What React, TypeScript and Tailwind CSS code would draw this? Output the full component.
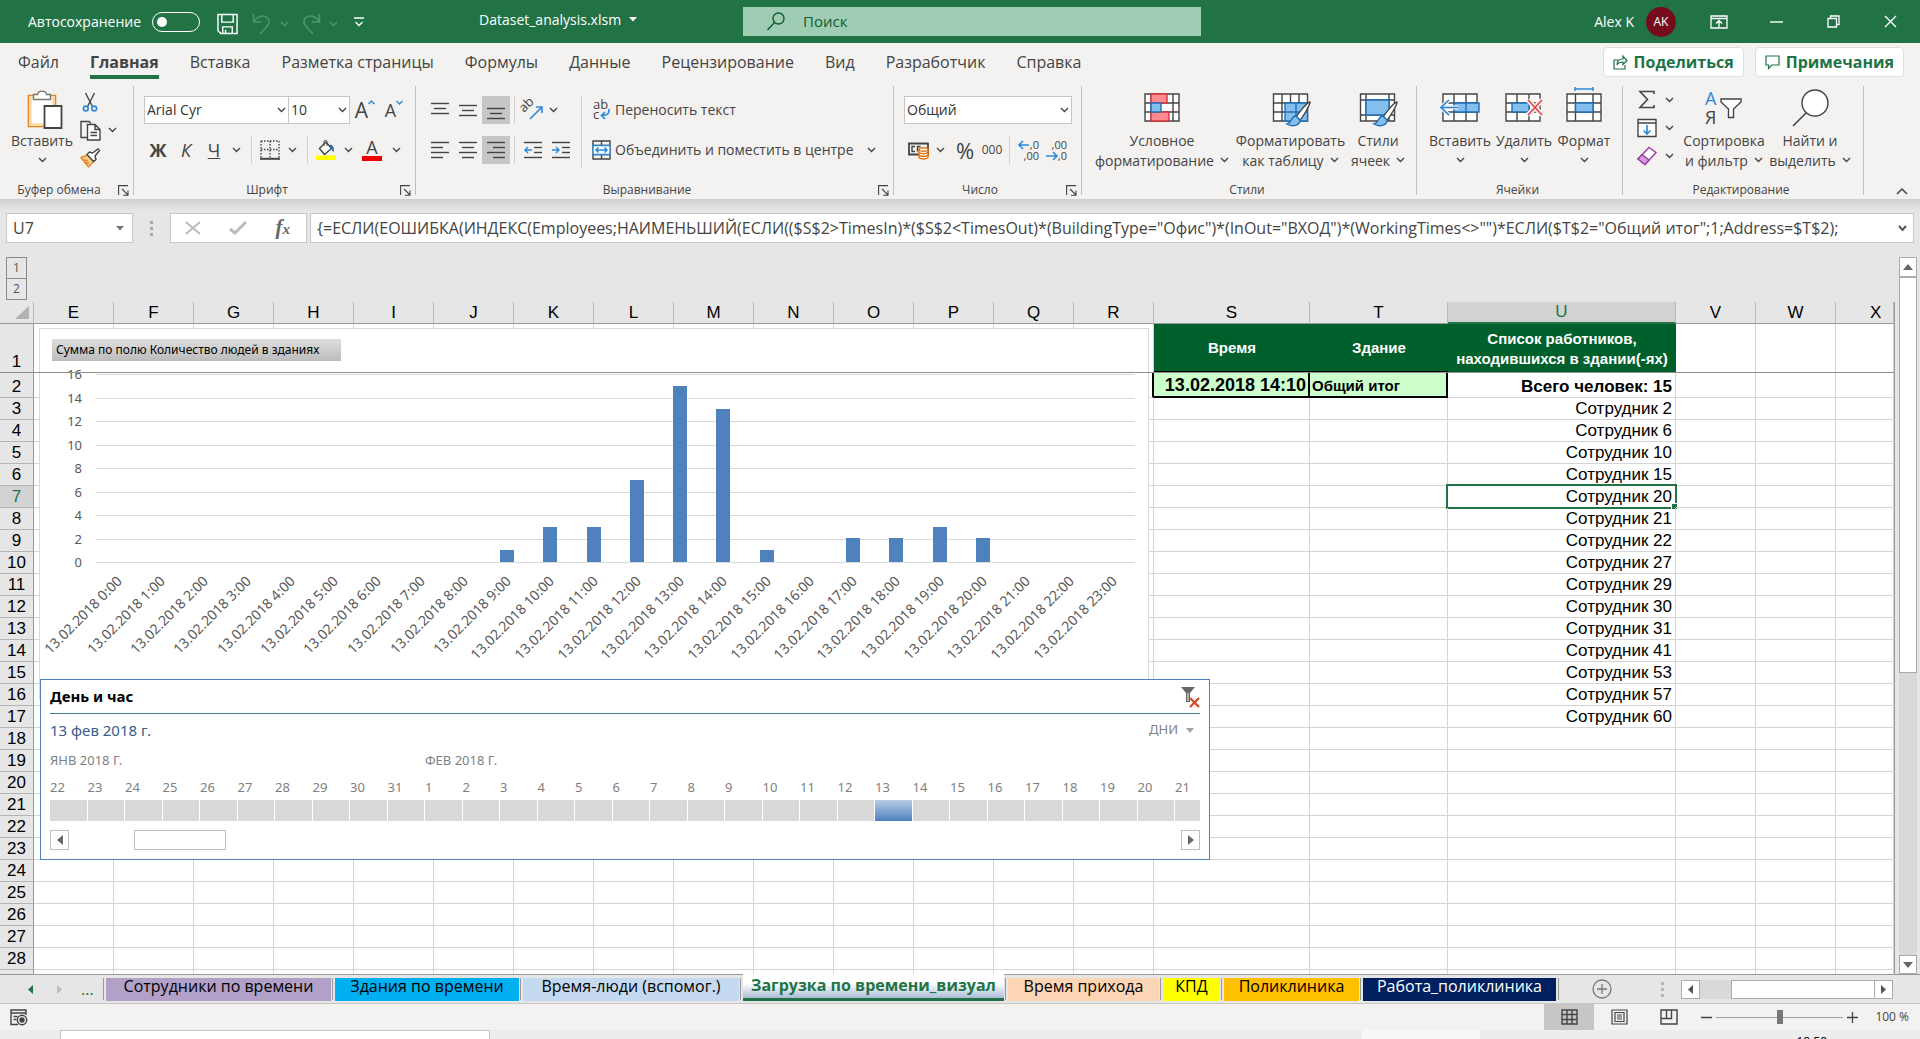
import type { ReactNode } from "react";

const BAR_COUNTS = [0, 0, 0, 0, 0, 0, 0, 0, 0, 1, 3, 3, 7, 15, 13, 1, 0, 2, 2, 3, 2, 0, 0, 0];

const COLUMNS = ["E", "F", "G", "H", "I", "J", "K", "L", "M", "N", "O", "P", "Q", "R", "S", "T", "U", "V", "W", "X"];

const EMPLOYEES = [2, 6, 10, 15, 20, 21, 22, 27, 29, 30, 31, 41, 53, 57, 60];

const ROWS = Array.from({ length: 28 }, (_, i) => i + 2);

const DAYS = [22, 23, 24, 25, 26, 27, 28, 29, 30, 31, ...Array.from({ length: 21 }, (_, i) => i + 1)];

const MENU = ["Файл", "Главная", "Вставка", "Разметка страницы", "Формулы", "Данные", "Рецензирование", "Вид", "Разработчик", "Справка"];

const SHEETS = [
    { name: "Сотрудники по времени", width: "w-[225px]", color: "bg-[#b1a0c7] text-black" },
    { name: "Здания по времени", width: "w-[184px]", color: "bg-[#00b0f0] text-black" },
    { name: "Время-люди (вспомог.)", width: "w-[216px]", color: "bg-[#c5d9f1] text-black" },
    { name: "Загрузка по времени_визуал", width: "w-[261px]", color: "" },
    { name: "Время прихода", width: "w-[151px]", color: "bg-[#fcd5b4] text-black" },
    { name: "КПД", width: "w-[57px]", color: "bg-[#ffff00] text-black" },
    { name: "Поликлиника", width: "w-[135px]", color: "bg-[#ffc000] text-black" },
    { name: "Работа_поликлиника", width: "w-[193px]", color: "bg-[#002060] text-white" },
];

/* ---------- small drawings ---------- */

const Chevron = ({ className = "" }: { className?: string }) => (
    <svg width="9" height="6" viewBox="0 0 9 6" className={`inline-block shrink-0 ${className}`}>
        <path d="M1 1l3.500 3.500L8 1" fill="none" stroke="currentColor" strokeWidth="1.400" />
    </svg>
);

const Launcher = () => (
    <svg width="11" height="11" viewBox="0 0 11 11" fill="none" stroke="#444" strokeWidth="1.100">
        <path d="M.6 10V.6H10M4 4l6 6M10 5.500V10.200H5" />
    </svg>
);

const Icon = ({ w = 20, h = 20, children }: { w?: number; h?: number; children: ReactNode }) => (
    <svg width={w} height={h} viewBox={`0 0 ${w} ${h}`} fill="none" stroke="#444" strokeWidth="1.400" className="shrink-0 overflow-visible">
        {children}
    </svg>
);

const PasteIcon = () => (
    <Icon w={42} h={39}>
        <path d="M7.500 6.500h27v31h-27z" fill="#fff" stroke="#e3862a" strokeWidth="1.600" />
        <path d="M9.500 8.500h23v27h-23z" stroke="#fbd9a0" strokeWidth="2.400" />
        <path d="M12.500 5.500h4c.5-4.500 8.500-4.500 9 0h4v5h-17z" fill="#fff" stroke="#777" />
        <path d="M23.500 17h17v22h-17z" fill="#fff" strokeWidth="1.800" />
    </Icon>
);

const CutIcon = () => (
    <Icon w={16}>
        <path d="M3.500 1l7 13.500M12.500 1l-7 13.500" />
        <circle cx="3.800" cy="16.500" r="2.400" stroke="#2b88d8" strokeWidth="1.600" />
        <circle cx="12.200" cy="16.500" r="2.400" stroke="#2b88d8" strokeWidth="1.600" />
    </Icon>
);

const CopyIcon = () => (
    <Icon w={21} h={21}>
        <path d="M7 17.500H1v-16h8l2 2" />
        <path d="M7.500 4.500h7.500l5 5v10.500H7.500zM15 4.500v5h5M10.500 12.500h6.500M10.500 15.500h6.500" fill="#fff" />
    </Icon>
);

const BrushIcon = () => (
    <Icon w={21}>
        <path d="M1 9.500l6.500-2.500 6 6.500-5 5.500z" fill="#fbd08a" stroke="#e3862a" />
        <path d="M3 12l5 .5M5 14.500l4 .5" stroke="#e3862a" />
        <path d="M7 6.500l2.500-2.500 3 1 5.500-4 1.500 1.500-4.500 5.500 1 3.500-2.500 2z" fill="#fff" />
    </Icon>
);

const BordersIcon = () => (
    <Icon>
        <path d="M1 1h18M1 1v17M19 1v17M10 1v17M1 9.500h18" strokeDasharray="1.500 1.500" />
        <path d="M0 18.800h20" strokeWidth="2" />
    </Icon>
);

const FillIcon = () => (
    <Icon>
        <path d="M3.500 8.500L10 2l5.500 6.500-7 6z" fill="#fff" />
        <path d="M8 6V1.500c0-1.500 3-1.500 3 0V6" strokeWidth="1" />
        <path d="M13.500 5c3-1 4.500 2 4.500 6.500-2 .5-2.500-3-4.500-6.500z" fill="#1e6fb8" stroke="none" />
        <path d="M0 15.500h20v4.500H0z" fill="#ffff00" stroke="none" />
    </Icon>
);

const Lines = ({ rows, accent }: { rows: [number, number, number][]; accent?: ReactNode }) => (
    <Icon w={18} h={20}>
        {rows.map(([y, x1, x2]) => (
            <path key={y} d={`M${x1} ${y}.500H${x2}`} />
        ))}
        {accent}
    </Icon>
);

const OrientIcon = () => (
    <Icon w={22}>
        <text x="2" y="13" fontSize="13" fill="#444" stroke="none" transform="rotate(-45 2 13)">ab</text>
        <path d="M8 19L20 7M14 7h6v6" stroke="#2b88d8" strokeWidth="1.600" />
    </Icon>
);

const WrapIcon = () => (
    <Icon w={18} h={22}>
        <text x="1" y="10" fontSize="13" fill="#444" stroke="none">ab</text>
        <text x="1" y="20" fontSize="13" fill="#444" stroke="none">c</text>
        <path d="M17 10c.5 4-1 6.500-7 6.500M13 13l-3.500 3.500L13 20" stroke="#2b88d8" strokeWidth="1.700" />
    </Icon>
);

const MergeIcon = () => (
    <Icon w={19}>
        <path d="M1 1h17v18H1zM1 5.500h17M1 14.500h17M9.500 1v4.500M9.500 14.500V19" />
        <path d="M1 5.500h17v9H1z" fill="#fff" stroke="#2b88d8" />
        <path d="M4 10h11M6.500 7.500L4 10l2.500 2.500M12.500 7.500L15 10l-2.500 2.500" stroke="#2b88d8" strokeWidth="1.500" />
    </Icon>
);

const MoneyIcon = () => (
    <Icon w={21}>
        <path d="M1 3.500h19v11H1z" strokeWidth="1.800" />
        <path d="M7 6.500H4v5h3M12.500 6.500H9.500v5" />
        <path d="M11 9.500v8c1.500 2 7 2 9 0v-8z" fill="#fff" stroke="#e3720d" />
        <ellipse cx="15.500" cy="9.500" rx="4.500" ry="1.700" fill="#fff" stroke="#e3720d" />
        <path d="M11 12.200c1.500 2 7 2 9 0M11 15c1.500 2 7 2 9 0" stroke="#e3720d" />
    </Icon>
);

const DecimalIcon = ({ more }: { more?: boolean }) => (
    <Icon w={21} h={22}>
        <g fill="#444" stroke="none" fontSize="11" textAnchor="end">
            <text x="21" y="10">{more ? ",0" : ",00"}</text>
            <text x="21" y="21">{more ? ",00" : ",0"}</text>
        </g>
        {more ? (
            <path d="M11 6H1M5 2L1 6l4 4" stroke="#2b88d8" strokeWidth="1.600" />
        ) : (
            <path d="M0 17h11M7 13l4 4-4 4" stroke="#2b88d8" strokeWidth="1.600" />
        )}
    </Icon>
);

const CondIcon = () => (
    <Icon w={36} h={40}>
        <path d="M1 6h34v27H1zM29 6v27M1 15h34M1 24h34M7 6v27" fill="#fff" />
        <path d="M7 6h16v9H7zM7 24h18v9H7z" fill="#ff8a8f" stroke="#d8343a" />
        <path d="M7 15h10v9H7z" fill="#83beec" stroke="#1e6fb8" />
    </Icon>
);

const Brush = () => (
    <>
        <path d="M38 14c-3 0-12 12-14 15l4 3c3-3 10-15 10-18z" fill="#fff" />
        <path d="M24 28c-5 0-4 7-9 8 5 3 13 2 13-4z" fill="#83beec" stroke="#1e6fb8" />
    </>
);

const TableStyleIcon = () => (
    <Icon w={38} h={40}>
        <path d="M1.500 6h34v27h-34zM10 6v27M18.500 6v27M27 6v27M1.500 15h34M1.500 24h34" fill="#fff" />
        <path d="M13 15h22.500v18H13z" fill="#83beec" stroke="#1e6fb8" />
        <path d="M13 24h22.500M24 15v18" stroke="#1e6fb8" />
        <Brush />
    </Icon>
);

const CellStyleIcon = () => (
    <Icon w={38} h={40}>
        <path d="M1.500 6h34v27h-34zM1.500 12h34M1.500 27h34M7 6v27M30 6v27" fill="#fff" />
        <path d="M7 12h23v15H7z" fill="#83beec" stroke="#1e6fb8" />
        <Brush />
    </Icon>
);

const InsertIcon = () => (
    <Icon w={40} h={40}>
        <path d="M3 6h34v27H3zM14 6v27M26 6v27M3 15h34M3 24h34" fill="#fff" />
        <path d="M14 15h25v9H14z" fill="#83beec" stroke="#1e6fb8" />
        <path d="M26 15v9" stroke="#1e6fb8" />
        <path d="M18 19.500H2M9 12l-8 7.500L9 27" stroke="#f3f2f1" strokeWidth="4" />
        <path d="M18 19.500H2M9 12l-8 7.500L9 27" stroke="#2b88d8" strokeWidth="1.700" />
    </Icon>
);

const DeleteIcon = () => (
    <Icon w={40} h={40}>
        <path d="M2 6h34v27H2zM13 6v27M25 6v27M2 15h34M2 24h34" fill="#fff" />
        <path d="M8 15h17v9H8z" fill="#83beec" stroke="#1e6fb8" />
        <path d="M24 12l14 15M38 12L24 27" stroke="#f3f2f1" strokeWidth="5" />
        <path d="M24 12l14 15M38 12L24 27" stroke="#e8474c" strokeWidth="1.700" />
    </Icon>
);

const FormatIcon = () => (
    <Icon w={36} h={40}>
        <path d="M1 6h34v27H1zM9.500 6v27M27 6v27M1 15h34M1 24h34" fill="#fff" />
        <path d="M9.500 15H27v9H9.500z" fill="#83beec" stroke="#1e6fb8" />
        <path d="M9 1h18M9-1v4M27-1v4" stroke="#2b88d8" />
    </Icon>
);

const SortIcon = () => (
    <Icon w={38} h={40}>
        <text x="0" y="17" fontSize="18" fill="#2b88d8" stroke="none">А</text>
        <text x="0" y="36" fontSize="18" fill="#444" stroke="none">Я</text>
        <path d="M16 11h20v3l-7.500 7v8.500h-5V21L16 14z" fill="#fff" />
    </Icon>
);

const FindIcon = () => (
    <Icon w={38} h={40}>
        <circle cx="24" cy="15" r="13" fill="#fff" />
        <path d="M15 25L2 38" strokeWidth="1.600" />
    </Icon>
);

/* ---------- ribbon ---------- */

const ToolButton = ({ label, className = "w-7", children }: { label: string; className?: string; children: ReactNode }) => (
    <button type="button" aria-label={label} className={`flex h-7 shrink-0 items-center justify-center ${className}`}>
        {children}
    </button>
);

const Sep = () => <div className="mr-1 ml-[7px] h-7 w-px shrink-0 bg-[#d2d0ce]" />;

const BigButton = ({ icon, lines, className, chevronBelow }: { icon: ReactNode; lines: string[]; className: string; chevronBelow?: boolean }) => (
    <button type="button" className={`flex shrink-0 flex-col items-center whitespace-nowrap pt-0.5 text-sm leading-5 ${className}`}>
        <span className="mb-[3px] flex h-10 items-center">{icon}</span>
        {lines.map((line, i) => (
            <span key={line}>
                {line}
                {!chevronBelow && i === lines.length - 1 && <Chevron className="mb-1 ml-1.5" />}
            </span>
        ))}
        {chevronBelow && <Chevron className="mt-1.5" />}
    </button>
);

const Group = ({ title, launcher, className, children }: { title: string; launcher?: boolean; className: string; children: ReactNode }) => (
    <section className={`flex shrink-0 ${className}`}>
        <div className="flex min-w-0 flex-1 flex-col">
            <div className="h-24">{children}</div>
            <div className="flex h-[18px] items-center pr-1">
                <h3 className="flex-1 text-center text-xs">{title}</h3>
                {launcher && (
                    <button type="button" aria-label={`${title}: параметры`}>
                        <Launcher />
                    </button>
                )}
            </div>
        </div>
        <div className="h-[109px] w-px bg-[#c2c0be]" />
    </section>
);

const Picker = ({ label, value, className }: { label: string; value: string; className: string }) => (
    <label className={`relative flex h-7 shrink-0 items-center border border-[#c8c6c4] bg-white ${className}`}>
        <select aria-label={label} className="h-full w-full appearance-none bg-transparent pl-0.5 text-sm text-[#333] outline-none">
            <option>{value}</option>
        </select>
        <Chevron className="pointer-events-none absolute right-0.5" />
    </label>
);

const Ribbon = () => (
    <div className="flex h-[120px] border-b border-[#d0d0d0] bg-[#f3f2f1] pt-1.5 text-[#444]">
        <Group title="Буфер обмена" launcher className="w-[134px]">
            <div className="flex">
                <BigButton icon={<PasteIcon />} lines={["Вставить"]} chevronBelow className="ml-1.5 w-[72px]" />
                <div className="flex flex-col pt-0.5">
                    <ToolButton label="Вырезать" className="w-6"><CutIcon /></ToolButton>
                    <div className="flex">
                        <ToolButton label="Копировать" className="w-6"><CopyIcon /></ToolButton>
                        <ToolButton label="Параметры копирования" className="w-5"><Chevron /></ToolButton>
                    </div>
                    <ToolButton label="Формат по образцу" className="w-6"><BrushIcon /></ToolButton>
                </div>
            </div>
        </Group>

        <Group title="Шрифт" launcher className="w-[282px]">
            <div className="flex flex-col gap-3 pt-2.5 pl-[10px]">
                <div className="flex">
                    <Picker label="Шрифт" value="Arial Cyr" className="w-[145px]" />
                    <Picker label="Размер шрифта" value="10" className="-ml-px w-[62px]" />
                    <ToolButton label="Увеличить размер шрифта" className="w-[30px]">
                        <span className="text-[21px] leading-7">A</span>
                        <svg width="7" height="5" viewBox="0 0 7 5" className="mb-4"><path d="M.5 4l3-3 3 3" fill="none" stroke="#2b88d8" strokeWidth="1.300" /></svg>
                    </ToolButton>
                    <ToolButton label="Уменьшить размер шрифта">
                        <span className="text-[18px] leading-7">A</span>
                        <svg width="7" height="5" viewBox="0 0 7 5" className="mb-4"><path d="M.5 1l3 3 3-3" fill="none" stroke="#2b88d8" strokeWidth="1.300" /></svg>
                    </ToolButton>
                </div>
                <div className="flex">
                    <ToolButton label="Полужирный"><b className="text-[18px] leading-7">Ж</b></ToolButton>
                    <ToolButton label="Курсив"><i className="text-[18px] leading-7">К</i></ToolButton>
                    <ToolButton label="Подчеркнутый"><u className="text-[18px] leading-7">Ч</u></ToolButton>
                    <ToolButton label="Вид подчеркивания" className="w-4"><Chevron /></ToolButton>
                    <Sep />
                    <ToolButton label="Границы"><BordersIcon /></ToolButton>
                    <ToolButton label="Виды границ" className="w-4"><Chevron /></ToolButton>
                    <Sep />
                    <ToolButton label="Цвет заливки"><FillIcon /></ToolButton>
                    <ToolButton label="Цвета заливки" className="w-4"><Chevron /></ToolButton>
                    <ToolButton label="Цвет текста" className="w-8">
                        <span className="flex w-5 flex-col items-center border-b-[5px] border-[#f00000] text-[18px] leading-[17px]">A</span>
                    </ToolButton>
                    <ToolButton label="Цвета текста" className="w-4"><Chevron /></ToolButton>
                </div>
            </div>
        </Group>

        <Group title="Выравнивание" launcher className="w-[478px]">
            <div className="flex pt-2.5 pl-[10px]">
                <div className="flex flex-col gap-3">
                    <div className="flex">
                        <ToolButton label="По верхнему краю"><Lines rows={[[3, 0, 18], [8, 3, 15], [13, 0, 18]]} /></ToolButton>
                        <ToolButton label="По середине"><Lines rows={[[5, 0, 18], [10, 3, 15], [15, 0, 18]]} /></ToolButton>
                        <ToolButton label="По нижнему краю" className="w-7 bg-[#c8c6c4]"><Lines rows={[[8, 0, 18], [13, 3, 15], [18, 0, 18]]} /></ToolButton>
                        <div className="mr-1 ml-1 h-7 w-px bg-[#d2d0ce]" />
                        <ToolButton label="Ориентация"><OrientIcon /></ToolButton>
                        <ToolButton label="Виды ориентации" className="w-3"><Chevron /></ToolButton>
                    </div>
                    <div className="flex">
                        <ToolButton label="По левому краю"><Lines rows={[[2, 0, 18], [7, 0, 12], [12, 0, 18], [17, 0, 12]]} /></ToolButton>
                        <ToolButton label="По центру"><Lines rows={[[2, 0, 18], [7, 3, 15], [12, 0, 18], [17, 3, 15]]} /></ToolButton>
                        <ToolButton label="По правому краю" className="w-7 bg-[#c8c6c4]"><Lines rows={[[2, 0, 18], [7, 6, 18], [12, 0, 18], [17, 6, 18]]} /></ToolButton>
                        <div className="mr-1 ml-1 h-7 w-px bg-[#d2d0ce]" />
                        <ToolButton label="Уменьшить отступ">
                            <Lines rows={[[2, 0, 18], [7, 10, 18], [12, 10, 18], [17, 0, 18]]} accent={<path d="M8 10H1M4 7l-3 3 3 3" stroke="#2b88d8" />} />
                        </ToolButton>
                        <ToolButton label="Увеличить отступ">
                            <Lines rows={[[2, 0, 18], [7, 10, 18], [12, 10, 18], [17, 0, 18]]} accent={<path d="M0 10h7M4 7l3 3-3 3" stroke="#2b88d8" />} />
                        </ToolButton>
                    </div>
                </div>
                <div className="ml-1.5 h-[72px] w-px bg-[#d2d0ce]" />
                <div className="ml-2.5 flex flex-col gap-3 text-sm">
                    <button type="button" className="flex h-7 items-center gap-[5px] whitespace-nowrap">
                        <WrapIcon />
                        Переносить текст
                    </button>
                    <div className="flex">
                        <button type="button" className="flex h-7 items-center gap-1 whitespace-nowrap">
                            <MergeIcon />
                            Объединить и поместить в центре
                        </button>
                        <ToolButton label="Виды объединения" className="w-9"><Chevron /></ToolButton>
                    </div>
                </div>
            </div>
        </Group>

        <Group title="Число" launcher className="w-[188px]">
            <div className="flex flex-col gap-3 pt-2.5 pl-[10px]">
                <Picker label="Числовой формат" value="Общий" className="w-[168px]" />
                <div className="flex">
                    <ToolButton label="Финансовый формат"><MoneyIcon /></ToolButton>
                    <ToolButton label="Виды финансового формата" className="w-4"><Chevron /></ToolButton>
                    <ToolButton label="Процентный формат" className="w-[34px]"><span className="text-[22px] leading-7">%</span></ToolButton>
                    <ToolButton label="Формат с разделителями" className="w-5"><span className="text-xs">000</span></ToolButton>
                    <Sep />
                    <ToolButton label="Увеличить разрядность"><DecimalIcon more /></ToolButton>
                    <ToolButton label="Уменьшить разрядность"><DecimalIcon /></ToolButton>
                </div>
            </div>
        </Group>

        <Group title="Стили" className="w-[335px]">
            <div className="flex pl-2.5">
                <BigButton icon={<CondIcon />} lines={["Условное", "форматирование"]} className="w-[140px]" />
                <BigButton icon={<TableStyleIcon />} lines={["Форматировать", "как таблицу"]} className="w-[117px]" />
                <BigButton icon={<CellStyleIcon />} lines={["Стили", "ячеек"]} className="w-[58px]" />
            </div>
        </Group>

        <Group title="Ячейки" className="w-[206px]">
            <div className="flex pl-[10px]">
                <BigButton icon={<InsertIcon />} lines={["Вставить"]} chevronBelow className="w-[66px]" />
                <BigButton icon={<DeleteIcon />} lines={["Удалить"]} chevronBelow className="w-[62px]" />
                <BigButton icon={<FormatIcon />} lines={["Формат"]} chevronBelow className="w-[58px]" />
            </div>
        </Group>

        <Group title="Редактирование" className="w-[241px]">
            <div className="flex pl-[10px]">
                <div className="flex flex-col">
                    <div className="flex">
                        <ToolButton label="Сумма" className="w-7">
                            <Icon w={18}><path d="M16 4V1.500H2L9.500 9.500 2 17.500h14V15" strokeWidth="1.600" /></Icon>
                        </ToolButton>
                        <ToolButton label="Виды сумм" className="w-4"><Chevron /></ToolButton>
                    </div>
                    <div className="flex">
                        <ToolButton label="Заполнить" className="w-7">
                            <Icon><path d="M1 1.500h18v17H1zM1 5h18" fill="#fff" /><path d="M10 7v9M6.500 12.500L10 16l3.500-3.500" stroke="#2b88d8" strokeWidth="1.600" /></Icon>
                        </ToolButton>
                        <ToolButton label="Виды заполнения" className="w-4"><Chevron /></ToolButton>
                    </div>
                    <div className="flex">
                        <ToolButton label="Очистить" className="w-7">
                            <Icon><path d="M1 13L12 1.500l7 5L8 18.500z" fill="#fff" stroke="#9a3fa5" /><path d="M1 13l4-4.500 7 5.500-4 4.500z" fill="#d59ddb" stroke="#9a3fa5" /></Icon>
                        </ToolButton>
                        <ToolButton label="Виды очистки" className="w-4"><Chevron /></ToolButton>
                    </div>
                </div>
                <BigButton icon={<SortIcon />} lines={["Сортировка", "и фильтр"]} className="ml-1 w-[86px]" />
                <BigButton icon={<FindIcon />} lines={["Найти и", "выделить"]} className="w-[86px]" />
            </div>
        </Group>

        <button type="button" aria-label="Свернуть ленту" className="mb-1 ml-auto flex items-end pr-3">
            <svg width="12" height="8" viewBox="0 0 12 8"><path d="M1 7l5-5 5 5" fill="none" stroke="#444" strokeWidth="1.500" /></svg>
        </button>
    </div>
);

const TitleBar = () => (
    <header className="flex h-[43px] items-center bg-[#217346] text-sm text-white">
        <div className="flex w-[479px] shrink-0 items-center pl-7">
            <label className="flex items-center gap-[11px]">
                Автосохранение
                <input type="checkbox" role="switch" className="peer sr-only" />
                <span className="flex h-5 w-12 items-center rounded-full border border-white px-1">
                    <span className="h-2.5 w-2.5 rounded-full bg-white" />
                </span>
            </label>
            <button type="button" aria-label="Сохранить" className="ml-[17px] pt-1">
                <svg width="21" height="22" viewBox="0 0 22 22" fill="none" stroke="#fff" strokeWidth="1.500"><path d="M1 1h20v20H4l-3-3zM5 1v8h12V1M6 21v-7h10v7M9 17v4" /></svg>
            </button>
            <button type="button" aria-label="Отменить" className="ml-3.5 flex items-center gap-2 pt-1 text-[#4f9570]">
                <svg width="20" height="22" viewBox="0 0 20 22" fill="none" stroke="currentColor" strokeWidth="1.500"><path d="M1.500 1v8h8M1.500 9C5 3 12 1 16 5.500c3 4 0 7-8 15.500" /></svg>
                <Chevron />
            </button>
            <button type="button" aria-label="Вернуть" className="ml-3 flex items-center gap-2 pt-1 text-[#4f9570]">
                <svg width="20" height="22" viewBox="0 0 20 22" fill="none" stroke="currentColor" strokeWidth="1.500"><path d="M18.500 1v8h-8M18.500 9C15 3 8 1 4 5.500c-3 4 0 7 8 15.500" /></svg>
                <Chevron />
            </button>
            <button type="button" aria-label="Настройка панели" className="ml-4">
                <svg width="10" height="10" viewBox="0 0 10 10" fill="none" stroke="#fff" strokeWidth="1.300"><path d="M0 1h10M1.500 5L5 8.500 8.500 5" /></svg>
            </button>
        </div>
        <button type="button" className="flex w-[264px] shrink-0 items-center gap-2 pb-1">
            Dataset_analysis.xlsm
            <svg width="8" height="5" viewBox="0 0 8 5"><path d="M0 0h8L4 4.500z" fill="#fff" /></svg>
        </button>
        <label className="flex h-[29px] w-[458px] shrink-0 items-center bg-[#9fcdb3] pl-6 text-[15px] text-[#0e5c2f]">
            <svg width="18" height="19" viewBox="0 0 18 19" fill="none" stroke="currentColor" strokeWidth="1.400"><circle cx="11.500" cy="6.500" r="5.500" /><path d="M7.500 10.500L.5 18" /></svg>
            <input type="text" aria-label="Поиск" placeholder="Поиск" className="ml-[18px] flex-1 bg-transparent outline-none placeholder:text-[#0e5c2f]" />
        </label>
        <div className="ml-auto flex items-center">
            <span>Alex K</span>
            <span className="ml-3 flex h-[30px] w-[30px] items-center justify-center rounded-full bg-[#750b1c] text-xs">AK</span>
            <button type="button" aria-label="Параметры ленты" className="ml-[34px]">
                <svg width="18" height="14" viewBox="0 0 18 14" fill="none" stroke="#fff" strokeWidth="1.300"><path d="M1 1h16v12H1zM1 3.500h16M9 12V6M6 8.500L9 5.500l3 3" /></svg>
            </button>
            <button type="button" aria-label="Свернуть" className="ml-[42px]">
                <svg width="13" height="12" viewBox="0 0 13 12"><path d="M0 6h13" stroke="#fff" strokeWidth="1.400" /></svg>
            </button>
            <button type="button" aria-label="Восстановить" className="ml-11">
                <svg width="13" height="13" viewBox="0 0 13 13" fill="none" stroke="#fff" strokeWidth="1.300"><path d="M1 3.500h8.500V12H1zM3.500 3.500V1H12v8.500H9.500" /></svg>
            </button>
            <button type="button" aria-label="Закрыть" className="mr-[23px] ml-11">
                <svg width="13" height="13" viewBox="0 0 13 13" fill="none" stroke="#fff" strokeWidth="1.400"><path d="M1 1l11 11M12 1L1 12" /></svg>
            </button>
        </div>
    </header>
);

const MenuBar = () => (
    <nav className="flex h-[37px] items-start bg-[#f3f2f1] pl-[18px] text-[16px] text-[#444]">
        <div className="flex gap-[31px] pt-[7px]">
            {MENU.map((item) => (
                <button
                    key={item}
                    type="button"
                    className={item === "Главная" ? "border-b-4 border-[#217346] font-bold leading-[25px]" : "border-b-4 border-transparent leading-[25px]"}>
                    {item}
                </button>
            ))}
        </div>
        <div className="ml-auto flex gap-[11px] pt-1 pr-4 font-bold text-[#217346]">
            <button type="button" className="flex h-[30px] items-center gap-1.5 rounded-sm border border-[#e1dfdd] bg-white px-[9px]">
                <svg width="15" height="16" viewBox="0 0 15 16" fill="none" stroke="currentColor" strokeWidth="1.200"><path d="M5 6H1v9h11v-4M4 11c0-4 2-6 6-6V2l4 4.500-4 4V8c-3 0-5 1-6 3z" /></svg>
                Поделиться
            </button>
            <button type="button" className="flex h-[30px] items-center gap-1.5 rounded-sm border border-[#e1dfdd] bg-white px-[9px]">
                <svg width="15" height="15" viewBox="0 0 15 15" fill="none" stroke="currentColor" strokeWidth="1.200"><path d="M1 1h13v9H7l-3.500 3.500V10H1z" /></svg>
                Примечания
            </button>
        </div>
    </nav>
);

const FormulaBar = () => (
    <div className="flex h-[43px] items-end bg-[#e6e6e6] bg-linear-to-b from-[#d2d2d2] to-[#e6e6e6] to-25% pr-1.5 pl-1.5 text-[16px] text-[#444]">
        <label className="relative flex h-[30px] w-[127px] shrink-0 items-center border border-[#c6c6c6] bg-white">
            <input aria-label="Имя ячейки" defaultValue="U7" className="w-full bg-transparent pl-1.5 outline-none" />
            <svg width="8" height="5" viewBox="0 0 8 5" className="absolute right-2"><path d="M0 0h8L4 4.500z" fill="#777" /></svg>
        </label>
        <div className="flex h-[30px] w-[37px] shrink-0 flex-col items-center justify-center gap-[3px]">
            <span className="h-[3px] w-[3px] bg-[#aaa]" />
            <span className="h-[3px] w-[3px] bg-[#aaa]" />
            <span className="h-[3px] w-[3px] bg-[#aaa]" />
        </div>
        <div className="flex h-[30px] w-[137px] shrink-0 items-center justify-between border border-[#c6c6c6] bg-white pr-4 pl-3.5">
            <button type="button" aria-label="Отмена">
                <svg width="16" height="14" viewBox="0 0 16 14"><path d="M1 1l14 12M15 1L1 13" stroke="#bbb" strokeWidth="2" /></svg>
            </button>
            <button type="button" aria-label="Ввод">
                <svg width="18" height="14" viewBox="0 0 18 14"><path d="M1 8l5 4L17 1" fill="none" stroke="#bbb" strokeWidth="3" /></svg>
            </button>
            <button type="button" aria-label="Вставить функцию" className="font-['Liberation_Serif',serif] text-[21px] leading-6 font-bold text-[#666] italic">
                f<span className="text-[15px]">x</span>
            </button>
        </div>
        <label className="ml-[3px] flex h-[30px] min-w-0 flex-1 items-center border border-[#c6c6c6] bg-white pr-1.5">
            <input
                aria-label="Строка формул"
                className="min-w-0 flex-1 bg-transparent pl-1.5 outline-none"
                defaultValue={'{=ЕСЛИ(ЕОШИБКА(ИНДЕКС(Employees;НАИМЕНЬШИЙ(ЕСЛИ(($S$2>TimesIn)*($S$2<TimesOut)*(BuildingType="Офис")*(InOut="ВХОД")*(WorkingTimes<>"")*ЕСЛИ($T$2="Общий итог";1;Address=$T$2);'}
            />
            <svg width="9" height="7" viewBox="0 0 9 7"><path d="M1 1l3.500 4L8 1" fill="none" stroke="#555" strokeWidth="2" /></svg>
        </label>
    </div>
);

/* ---------- sheet ---------- */

const PivotChart = () => (
    <div className="absolute top-[26px] left-[39px] w-[1110px] border border-[#d9d9d9] bg-white">
        <button
            type="button"
            className="absolute top-2.5 left-3 h-[22px] w-[289px] whitespace-nowrap bg-linear-to-b from-[#dedede] to-[#bcbcbc] px-1 text-left font-['Noto_Sans',sans-serif] text-xs text-black">
            Сумма по полю Количество людей в зданиях
        </button>
        <svg width="1108" height="370" viewBox="40 329 1108 370" className="block font-['Noto_Sans',sans-serif] text-[13px]" fill="#595959">
            {[0, 2, 4, 6, 8, 10, 12, 14, 16].map((v) => {
                const y = Math.round(562 - v * 11.75);
                return (
                    <g key={v}>
                        <path d={`M96 ${y}.500H1135`} stroke="#d9d9d9" />
                        <text x="82" y={y + 5} textAnchor="end">{v}</text>
                    </g>
                );
            })}
            {BAR_COUNTS.map((count, hour) => {
                const cx = Math.round(96 + (hour + 0.5) * 43.27);
                const height = Math.round(count * 11.75);
                return (
                    <g key={hour}>
                        <rect x={cx - 7} y={562 - height} width="14" height={height} fill="#4f81bd" />
                        <text x={cx + 5} y="582" textAnchor="end" transform={`rotate(-45 ${cx + 5} 582)`} className="text-sm">
                            {`13.02.2018 ${hour}:00`}
                        </text>
                    </g>
                );
            })}
        </svg>
    </div>
);

const Timeline = () => (
    <div className="absolute top-[377px] left-[40px] h-[181px] w-[1170px] border border-[#4f7fb5] bg-white px-[9px] font-['Noto_Sans',sans-serif] text-[#7f7f7f]">
        <div className="flex h-[34px] items-center justify-between border-b border-[#4a7f96]">
            <h2 className="text-[15px] font-bold text-black">День и час</h2>
            <button type="button" aria-label="Очистить фильтр">
                <svg width="20" height="22" viewBox="0 0 20 22"><path d="M1 1h14l-5 6v9H6V7z" fill="#666" /><path d="M8 7v8" stroke="#fff" /><path d="M10 12l9 9M19 12l-9 9" stroke="#d24726" strokeWidth="2.200" /></svg>
            </button>
        </div>
        <div className="flex h-8 items-center justify-between">
            <span className="text-[15px] text-[#385d8a]">13 фев 2018 г.</span>
            <button type="button" className="flex items-center gap-2 pr-1.5 text-[13px]">
                ДНИ
                <svg width="8" height="5" viewBox="0 0 8 5"><path d="M0 0h8L4 5z" fill="#a6a6a6" /></svg>
            </button>
        </div>
        <div className="flex h-[29px] items-center text-[13px]">
            <span className="flex-[30]">ЯНВ 2018 Г.</span>
            <span className="flex-[62]">ФЕВ 2018 Г.</span>
        </div>
        <div className="flex h-[25px] items-center text-[13px]">
            {DAYS.map((day, i) => (
                <span key={i} className={i === DAYS.length - 1 ? "min-w-0 flex-[2]" : "min-w-0 flex-[3]"}>{day}</span>
            ))}
        </div>
        <div className="flex h-[21px]">
            {DAYS.map((day, i) => (
                <button
                    key={i}
                    type="button"
                    aria-label={`День ${day}`}
                    className={`${i === DAYS.length - 1 ? "flex-[2]" : "flex-[3] border-r border-white"} ${i === 22 ? "bg-linear-to-b from-[#b9cce6] to-[#4f81bd]" : "bg-[#d9d9d9]"}`}
                />
            ))}
        </div>
        <div className="mt-[9px] flex h-5 justify-between">
            <button type="button" aria-label="Назад" className="flex w-[19px] items-center justify-center border border-[#bfbfbf]">
                <svg width="6" height="10" viewBox="0 0 6 10"><path d="M6 0v10L0 5z" fill="#666" /></svg>
            </button>
            <div className="mr-auto ml-[65px] w-[92px] border border-[#bfbfbf]" />
            <button type="button" aria-label="Вперед" className="flex w-[19px] items-center justify-center border border-[#bfbfbf]">
                <svg width="6" height="10" viewBox="0 0 6 10"><path d="M0 0v10l6-5z" fill="#666" /></svg>
            </button>
        </div>
    </div>
);

const RowHead = ({ row }: { row: number }) => (
    <th
        scope="row"
        className={`border-r border-b border-r-[#999] border-b-[#b5b5b5] p-0 text-center align-bottom font-normal ${row === 7 ? "bg-[#d2d2d2] text-[#217346]" : "bg-[#e6e6e6] text-black"}`}>
        {row < 29 && row}
    </th>
);

const cellText = (row: number, col: string) => {
    if (row === 2 && col === "S") return "13.02.2018 14:10";
    if (row === 2 && col === "T") return "Общий итог";
    if (row === 2 && col === "U") return "Всего человек: 15";
    if (col === "U" && EMPLOYEES[row - 3]) return `Сотрудник ${EMPLOYEES[row - 3]}`;
    return "";
};

const cellClass = (row: number, col: string) => {
    if (row === 2 && col === "R") return "border-r-2 border-b border-r-black border-b-[#d4d4d4]";
    if (row === 2 && col === "S") return "border-r-2 border-b-2 border-black bg-[#ccffcc] pr-0.5 text-right text-[18px] font-bold";
    if (row === 2 && col === "T") return "border-r-2 border-b-2 border-black bg-[#ccffcc] pl-0.5 text-left text-[15px] font-bold";
    if (row === 2 && col === "U") return "border-r border-b border-[#d4d4d4] pr-[3px] text-right font-bold";
    return "border-r border-b border-[#d4d4d4] pr-[3px] text-right";
};

const Grid = () => (
    <div className="relative min-h-0 flex-1 overflow-hidden font-['Liberation_Sans',Arial,sans-serif]">
        <table className="w-full table-fixed border-separate border-spacing-0 border-r border-[#999] bg-white text-[17px] leading-[21px] text-black">
            <colgroup>
                <col className="w-[34px]" />
                {COLUMNS.slice(0, 14).map((c) => <col key={c} className="w-[80px]" />)}
                <col className="w-[156px]" />
                <col className="w-[138px]" />
                <col className="w-[228px]" />
                <col className="w-[80px]" />
                <col className="w-[80px]" />
                <col />
            </colgroup>
            <thead>
                <tr className="h-[22px] bg-[#e6e6e6]">
                    <td className="border-r border-b border-r-[#bbb] border-b-[#999] p-0">
                        <svg width="14" height="13" viewBox="0 0 14 13" className="mr-1 ml-auto block"><path d="M14 0v13H0z" fill="#b2b2b2" /></svg>
                    </td>
                    {COLUMNS.map((c) => (
                        <th
                            key={c}
                            scope="col"
                            className={`border-r p-0 align-bottom font-normal ${c === "U" ? "border-b-2 border-r-[#bbb] border-b-[#217346] bg-[#d2d2d2] leading-5 text-[#217346]" : "border-b border-r-[#bbb] border-b-[#999]"} ${c === "X" ? "pl-[34px] text-left" : "text-center"}`}>
                            {c}
                        </th>
                    ))}
                </tr>
            </thead>
            <tbody>
                <tr className="h-[49px]">
                    <RowHead row={1} />
                    {COLUMNS.map((c) => {
                        if (c === "S" || c === "T" || c === "U") {
                            return (
                                <td key={c} className={`bg-[#00602b] p-0 text-center text-[15px] leading-5 font-bold text-white ${c === "U" ? "" : "border-b-2 border-black"}`}>
                                    {c === "S" && "Время"}
                                    {c === "T" && "Здание"}
                                    {c === "U" && <>Список работников,<br />находившихся в здании(-ях)</>}
                                </td>
                            );
                        }
                        return <td key={c} className="border-r border-b border-[#d4d4d4] p-0" />;
                    })}
                </tr>
                {ROWS.map((row) => (
                    <tr key={row} className={row === 2 ? "h-[25px]" : "h-[22px]"}>
                        <RowHead row={row} />
                        {COLUMNS.map((c) => (
                            <td key={c} className={`relative p-0 align-bottom whitespace-nowrap ${cellClass(row, c)}`}>
                                {cellText(row, c)}
                                {row === 7 && c === "U" && (
                                    <span className="absolute -top-0.5 -right-0.5 -bottom-0.5 -left-0.5 border-2 border-[#217346]">
                                        <span className="absolute -right-[3px] -bottom-[3px] h-[7px] w-[7px] border border-white bg-[#217346]" />
                                    </span>
                                )}
                            </td>
                        ))}
                    </tr>
                ))}
            </tbody>
        </table>
        <PivotChart />
        <Timeline />
        {/* frozen pane edge, drawn over the chart too */}
        <div className="absolute top-[70px] right-0 left-0 h-px bg-[#8f8f8f]" />
    </div>
);

const Sheet = () => (
    <main className="flex min-h-0 flex-1 bg-[#e6e6e6]">
        <div className="flex min-w-0 flex-1 flex-col">
            <div className="flex h-[59px] shrink-0 flex-col pt-3.5 pl-1.5 text-xs text-[#555]">
                <button type="button" className="h-[22px] w-[21px] border border-[#8a8a8a]">1</button>
                <button type="button" className="-mt-px h-[22px] w-[21px] border border-[#8a8a8a]">2</button>
            </div>
            <Grid />
        </div>
        <div className="flex w-[25px] shrink-0 flex-col items-center pt-3.5">
            <button type="button" aria-label="Вверх" className="flex h-5 w-[18px] shrink-0 items-center justify-center border border-[#ababab] bg-white">
                <svg width="10" height="6" viewBox="0 0 10 6"><path d="M0 6h10L5 0z" fill="#666" /></svg>
            </button>
            <div className="h-[396px] w-[18px] shrink-0 border border-[#ababab] bg-white" />
            <div className="w-[18px] flex-1 bg-[#d9d9d9]" />
            <button type="button" aria-label="Вниз" className="flex h-[19px] w-[18px] shrink-0 items-center justify-center border border-[#ababab] bg-white">
                <svg width="10" height="6" viewBox="0 0 10 6"><path d="M0 0h10L5 6z" fill="#666" /></svg>
            </button>
        </div>
    </main>
);

const SheetTabs = () => (
    <div className="flex h-[29px] shrink-0 border-t border-[#999] bg-[#e6e6e6] pr-[27px]">
        <div className="flex w-[102px] shrink-0 items-center pl-7">
            <button type="button" aria-label="Предыдущий лист"><svg width="5" height="9" viewBox="0 0 5 9"><path d="M5 0v9L0 4.500z" fill="#217346" /></svg></button>
            <button type="button" aria-label="Следующий лист" className="ml-6"><svg width="5" height="9" viewBox="0 0 5 9"><path d="M0 0v9l5-4.500z" fill="#bbb" /></svg></button>
            <button type="button" aria-label="Другие листы" className="ml-[19px] text-base leading-4 text-[#217346]">...</button>
        </div>
        <div className="flex shrink-0 text-[16px] leading-4 whitespace-nowrap">
            {SHEETS.map((s) => (
                <div key={s.name} className="flex">
                    <span className="mt-[3px] mr-0.5 ml-px h-[22px] w-px bg-[#999]" />
                    <button
                        type="button"
                        className={
                            s.color
                                ? `mt-[3px] h-[23px] pb-2.5 text-center ${s.width} ${s.color}`
                                : `-mt-px h-[27px] border-b-[3px] border-[#217346] bg-linear-to-b from-white from-40% to-[#a9bcd6] pb-0.5 text-center font-bold text-[#217346] ${s.width}`
                        }>
                        {s.name}
                    </button>
                </div>
            ))}
            <span className="mt-[3px] ml-0.5 h-[22px] w-px bg-[#999]" />
        </div>
        <button type="button" aria-label="Новый лист" className="ml-[33px]">
            <svg width="20" height="20" viewBox="0 0 20 20" fill="none" stroke="#777" strokeWidth="1.300"><circle cx="10" cy="10" r="9" /><path d="M10 5v10M5 10h10" /></svg>
        </button>
        <div className="ml-auto flex items-center">
            <svg width="3" height="15" viewBox="0 0 3 15" className="mr-[17px]"><path d="M0 0h3v3H0zM0 6h3v3H0zM0 12h3v3H0z" fill="#b5b5b5" /></svg>
            <button type="button" aria-label="Влево" className="flex h-[19px] w-[19px] items-center justify-center border border-[#ababab] bg-white">
                <svg width="5" height="9" viewBox="0 0 5 9"><path d="M5 0v9L0 4.500z" fill="#555" /></svg>
            </button>
            <div className="h-[19px] w-[31px] bg-[#d9d9d9]" />
            <div className="h-[19px] w-[143px] border border-r-0 border-[#ababab] bg-white" />
            <button type="button" aria-label="Вправо" className="flex h-[19px] w-[19px] items-center justify-center border border-[#ababab] bg-white">
                <svg width="5" height="9" viewBox="0 0 5 9"><path d="M0 0v9l5-4.500z" fill="#555" /></svg>
            </button>
        </div>
    </div>
);

const StatusBar = () => (
    <footer className="shrink-0 text-[#444]">
        <div className="flex h-[27px] items-center border-t border-[#c6c6c6] bg-[#f3f2f1] pr-[11px] pl-2.5">
            <button type="button" aria-label="Запись макроса">
                <Icon w={18} h={17}><path d="M8 15.500H1V1h15v5M1 4h15M3.500 7.500h4M3.500 10.500h3" /><circle cx="12" cy="11" r="4.700" /><circle cx="12" cy="11" r="2" fill="#444" /></Icon>
            </button>
            <button type="button" aria-label="Обычный" className="ml-auto flex h-full w-[50px] items-center justify-center bg-[#c8c6c4]">
                <Icon w={17} h={16}><path d="M1 1h15v14H1zM6 1v14M11 1v14M1 5.500h15M1 10.500h15" /></Icon>
            </button>
            <button type="button" aria-label="Разметка страницы" className="flex w-[50px] items-center justify-center">
                <Icon w={17} h={16}><path d="M1 1h15v14H1zM4 3.500h9v9H4zM6 6h5M6 8h5M6 10h5" strokeWidth="1.200" /></Icon>
            </button>
            <button type="button" aria-label="Страничный режим" className="flex w-[50px] items-center justify-center">
                <Icon w={18} h={16}><path d="M1 1h16v14H1zM1 9.500h10.500V1M6.500 1v8.500" /></Icon>
            </button>
            <button type="button" aria-label="Уменьшить" className="ml-[7px]"><svg width="11" height="11" viewBox="0 0 11 11"><path d="M0 5.500h11" stroke="#444" strokeWidth="1.500" /></svg></button>
            <div className="ml-1 flex h-[14px] w-[127px] items-center">
                <div className="h-px w-[61px] bg-[#a19f9d]" />
                <div className="h-[14px] w-1.5 bg-[#777]" />
                <div className="h-px flex-1 bg-[#a19f9d]" />
            </div>
            <button type="button" aria-label="Увеличить" className="ml-1"><svg width="11" height="11" viewBox="0 0 11 11"><path d="M0 5.500h11M5.500 0v11" stroke="#444" strokeWidth="1.300" /></svg></button>
            <span className="ml-[17px] text-xs">100 %</span>
        </div>
        <div className="flex h-[9px] overflow-hidden bg-[#ededed] pl-[60px] text-xs leading-4 text-black">
            <div className="w-[430px] border border-b-0 border-[#c6c6c6] bg-white" />
            <div className="ml-[872px] w-[118px] bg-[#f8f8f8]" />
            <span className="mt-1 mr-[93px] ml-auto">18:58</span>
        </div>
    </footer>
);

const App = () => (
    <div className="flex h-screen min-h-[600px] flex-col overflow-hidden font-['Open_Sans','Noto_Sans',sans-serif]">
        <TitleBar />
        <MenuBar />
        <Ribbon />
        <FormulaBar />
        <Sheet />
        <SheetTabs />
        <StatusBar />
    </div>
);

export default App;
